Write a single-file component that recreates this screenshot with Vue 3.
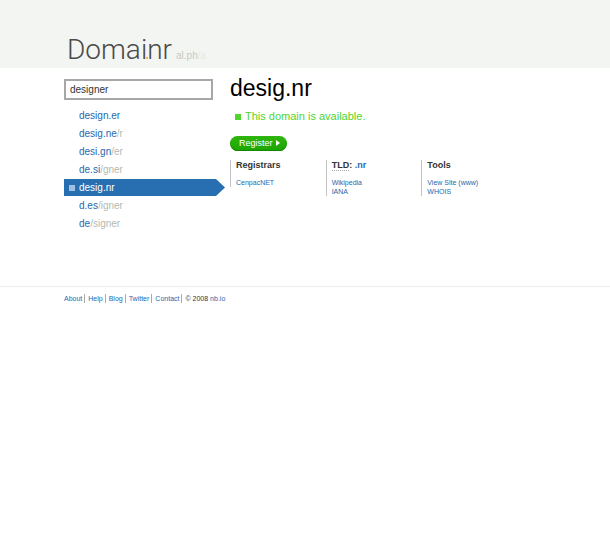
<script setup>
import { ref } from 'vue'

const query = ref('designer')
const selected = ref('desig.nr')

const results = [
  { domain: 'design.er', path: '' },
  { domain: 'desig.ne', path: '/r' },
  { domain: 'desi.gn', path: '/er' },
  { domain: 'de.si', path: '/gner' },
  { domain: 'desig.nr', path: '' },
  { domain: 'd.es', path: '/igner' },
  { domain: 'de', path: '/signer' }
]

const footerLinks = ['About', 'Help', 'Blog', 'Twitter', 'Contact']
</script>

<template>
  <div class="page">
    <header class="header">
      <a class="logo" href="#">Doma<span class="logo-i">i</span>nr</a>
      <span class="stage">al.ph<span class="fade">/a</span></span>
    </header>

    <main class="main">
      <section class="search">
        <input v-model="query" class="query" type="text" aria-label="Domain search" />
        <ul class="results">
          <li v-for="item in results" :key="item.domain">
            <a
              href="#"
              class="result"
              :class="{ active: item.domain === selected }"
              @click.prevent="selected = item.domain"
            >{{ item.domain }}<span class="path">{{ item.path }}</span></a>
          </li>
        </ul>
      </section>

      <section class="detail">
        <h1 class="title">{{ selected }}</h1>
        <p class="status">This domain is available.</p>
        <button class="register" type="button">
          Register
          <svg class="arrow" viewBox="0 0 4 6" aria-hidden="true"><path d="M0 0L4 3L0 6Z" /></svg>
        </button>
        <div class="columns">
          <div class="column">
            <h2>Registrars</h2>
            <a href="#">CenpacNET</a>
          </div>
          <div class="column">
            <h2><abbr>TLD</abbr>: <a href="#">.nr</a></h2>
            <a href="#">Wikipedia</a>
            <a href="#">IANA</a>
          </div>
          <div class="column">
            <h2>Tools</h2>
            <a href="#">View Site (www)</a>
            <a href="#">WHOIS</a>
          </div>
        </div>
      </section>
    </main>

    <footer class="footer">
      <a v-for="link in footerLinks" :key="link" class="footer-item" href="#">{{ link }}</a>
      <span>© 2008 <a href="#">nb.io</a></span>
    </footer>
  </div>
</template>

<style>
body {
  background: #fff;
}
</style>

<style scoped>
.page {
  font-family: "Liberation Sans", Arial, sans-serif;
  color: #333;
}

a {
  color: #1e69ae;
  text-decoration: none;
}

.header {
  display: flex;
  align-items: baseline;
  gap: 4px;
  padding: 32px 67px 0;
  background: #f3f5f2;
}

.logo {
  font-family: Roboto, "Liberation Sans", sans-serif;
  font-size: 28px;
  font-weight: 300;
  line-height: 36px;
  color: #4a4a4a;
}

.logo-i {
  position: relative;
}

.logo-i::after {
  content: "";
  position: absolute;
  right: -1px;
  bottom: 7px;
  width: 2px;
  height: 2px;
  background: #f0b44c;
}

.stage {
  font-size: 10px;
  color: #c6c9c4;
}

.fade {
  color: #e6e9e4;
}

.main {
  display: flex;
  gap: 17px;
  padding: 11px 64px 0;
}

.search {
  flex: 0 0 149px;
}

.query {
  box-sizing: border-box;
  display: block;
  width: 100%;
  height: 21px;
  padding: 0 4px;
  border: 2px solid #a7a7a7;
  border-radius: 0;
  outline: 0;
  background: #fff;
  font: 10px "Liberation Sans", Arial, sans-serif;
  color: #333;
}

.results {
  display: grid;
  gap: 1px;
  margin: 7px 0 0;
  padding: 0;
  list-style: none;
}

.result {
  position: relative;
  display: block;
  padding-left: 15px;
  font-size: 10px;
  line-height: 17px;
}

.path {
  color: #b4bab1;
}

.active {
  margin-right: -12px;
  background: #286fb1;
  color: #fff;
  clip-path: polygon(0 0, calc(100% - 9px) 0, 100% 50%, calc(100% - 9px) 100%, 0 100%);
}

.active::before {
  content: "";
  position: absolute;
  left: 5px;
  top: 6px;
  width: 6px;
  height: 6px;
  background: #a0c1df;
}

.detail {
  flex: 1;
  min-width: 0;
}

.title {
  margin: 0;
  font-size: 23px;
  font-weight: 400;
  line-height: 18px;
  color: #000;
}

.status {
  display: flex;
  align-items: center;
  gap: 4px;
  margin: 12px 0 0;
  padding-left: 5px;
  font-size: 11px;
  line-height: 14px;
  color: #50d52e;
}

.status::before {
  content: "";
  width: 6px;
  height: 6px;
  margin-top: 2px;
  background: #50d52e;
}

.register {
  display: flex;
  align-items: center;
  gap: 3px;
  height: 15px;
  margin: 13px 0 0;
  padding: 0 7px 1px 9px;
  border: 0;
  border-radius: 8px;
  background: linear-gradient(#2fb50e, #1ca600);
  box-shadow: inset 0 -1px 1px #168500;
  font: 9px "Liberation Sans", Arial, sans-serif;
  color: #fff;
}

.arrow {
  width: 4px;
  height: 6px;
  fill: #fff;
}

.columns {
  display: grid;
  grid-template-columns: repeat(3, 1fr);
  align-items: start;
  margin-top: 9px;
  margin-right: 29px;
}

.column {
  padding-left: 5px;
  border-left: 1px solid #c4c4c4;
  font-size: 7px;
  line-height: 9px;
}

.column > a {
  display: block;
}

h2 {
  margin: 0 0 8px;
  font-size: 9px;
  line-height: 10px;
}

abbr {
  border-bottom: 1px dotted #aaa;
}

.footer {
  display: flex;
  align-items: center;
  gap: 3px;
  margin-top: 54px;
  padding: 7px 64px;
  border-top: 1px solid #ececec;
  font-size: 7px;
  line-height: 9px;
}

.footer-item {
  padding-right: 2px;
  border-right: 1px solid #aaa;
}
</style>
